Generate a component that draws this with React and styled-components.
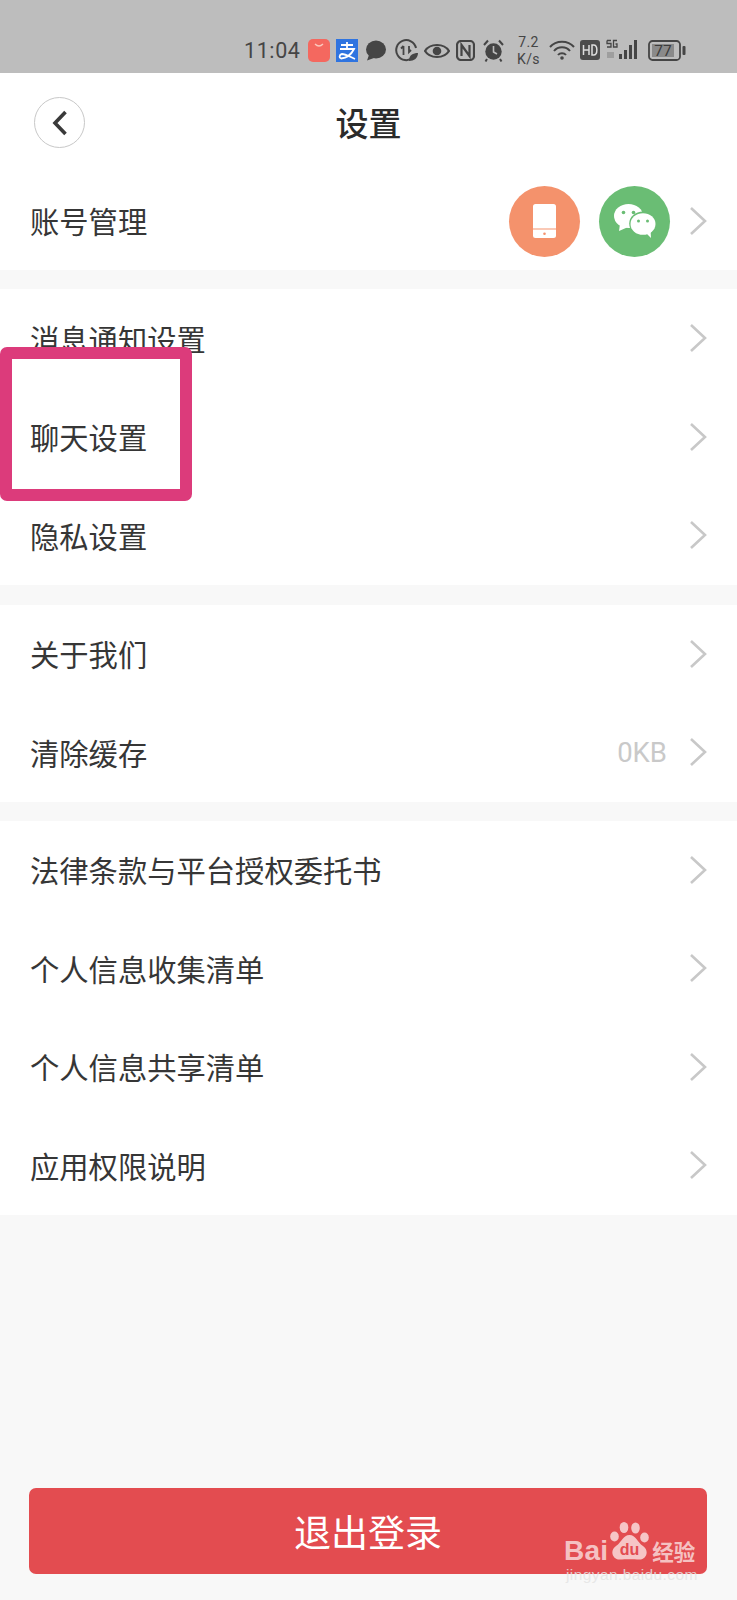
import React from 'react';
import styled, { createGlobalStyle } from 'styled-components';

const GlobalStyle = createGlobalStyle`
  html, body {
    margin: 0;
    padding: 0;
    background: #f8f8f8;
  }
  body {
    font-family: "Noto Sans CJK SC", "Liberation Sans", sans-serif;
  }
`;

const Page = styled.div`
  position: relative;
  width: 737px;
  height: 1600px;
  overflow: hidden;
  display: flex;
  flex-direction: column;
  background: #f8f8f8;
`;

const StatusBar = styled.div`
  height: 73px;
  flex: none;
  box-sizing: border-box;
  padding: 32px 48px 0 244px;
  display: flex;
  align-items: flex-start;
  background: #bdbdbd;
  color: #454545;
`;

const Clock = styled.span`
  font-family: "Roboto", sans-serif;
  font-size: 21.5px;
  line-height: 37px;
  letter-spacing: 0.6px;
  width: 64px;
  flex: none;
`;

const StatusIcon = styled.svg`
  flex: none;
  margin-top: ${p => p.$top || 7}px;
  margin-right: ${p => p.$gap || 0}px;
`;

const Speed = styled.span`
  width: 35px;
  margin: 2px 3px 0 0;
  flex: none;
  font-family: "Roboto", sans-serif;
  font-size: 14px;
  line-height: 16.5px;
  text-align: center;
  letter-spacing: 0.4px;
`;

const Header = styled.header`
  position: relative;
  height: 99px;
  flex: none;
  box-sizing: border-box;
  padding-bottom: 1px;
  display: flex;
  align-items: center;
  justify-content: center;
  background: #fff;
`;

const BackButton = styled.div`
  position: absolute;
  left: 34px;
  top: 24px;
  width: 51px;
  height: 51px;
  box-sizing: border-box;
  border: 1px solid #c8c8c8;
  border-radius: 50%;
  display: flex;
  align-items: center;
  justify-content: center;
`;

const Title = styled.h1`
  margin: 0;
  font-size: 33px;
  font-weight: 500;
  line-height: 1;
  color: #2b2b2b;
`;

const Section = styled.section`
  flex: none;
  background: #fff;
  margin-top: ${p => p.$gap || 0}px;
`;

const Row = styled.div`
  height: ${p => p.$h || 98.5}px;
  box-sizing: border-box;
  padding: 0 30px;
  display: flex;
  align-items: center;
  color: #363636;
  font-size: 29.3px;
`;

const Label = styled.span`
  flex: 1;
  line-height: 1;
`;

const Hint = styled.span`
  color: #c9c9c9;
  font-family: "Roboto", sans-serif;
  font-size: 27.5px;
  margin-right: 22px;
`;

const Badge = styled.div`
  width: 71px;
  height: 71px;
  border-radius: 50%;
  flex: none;
  display: flex;
  align-items: center;
  justify-content: center;
  background: ${p => p.$color};
  margin-right: ${p => p.$gap}px;
`;

const LogoutButton = styled.div`
  margin: auto 30px 26px 29px;
  height: 86px;
  flex: none;
  border-radius: 7px;
  background: #e34c50;
  color: #fff;
  font-size: 37px;
  display: flex;
  align-items: center;
  justify-content: center;
`;

const Highlight = styled.div`
  position: absolute;
  left: 0;
  top: 347px;
  width: 192px;
  height: 154px;
  box-sizing: border-box;
  border: 12px solid #dc3b7b;
  border-radius: 7px;
`;

const Watermark = styled.div`
  position: absolute;
  left: 564px;
  top: 1522px;
  width: 136px;
  color: rgba(255, 255, 255, 0.68);
`;

const Brand = styled.div`
  display: flex;
  align-items: flex-end;
  height: 42px;
`;

const BrandLatin = styled.span`
  font-family: "Liberation Sans", sans-serif;
  font-weight: 700;
  font-size: 28px;
  line-height: 26px;
  letter-spacing: 0.2px;
`;

const BrandCjk = styled.span`
  margin-left: 1px;
  font-size: 21.5px;
  font-weight: 700;
  line-height: 26px;
`;

const PawMark = styled.svg`
  flex: none;
  margin: 0 2px 4px 2px;
`;

const Domain = styled.div`
  margin-top: 3px;
  padding-left: 2px;
  font-family: "Liberation Sans", sans-serif;
  font-size: 15.5px;
  line-height: 16px;
  letter-spacing: 0.4px;
  white-space: nowrap;
  color: rgba(228, 228, 228, 0.85);
`;

const Chevron = () => (
  <svg width="18" height="30" viewBox="0 0 18 30">
    <path d="M2 2 L16 15 L2 28" fill="none" stroke="#c8c8c8" strokeWidth="2.6" />
  </svg>
);

const ListRow = ({ label, hint }) => (
  <Row>
    <Label>{label}</Label>
    {hint && <Hint>{hint}</Hint>}
    <Chevron />
  </Row>
);

const PhoneIcon = () => (
  <svg width="23" height="34" viewBox="0 0 23 34">
    <path d="M2.500 0 H20.500 a2.500 2.500 0 0 1 2.500 2.500 V24.500 H0 V2.500 a2.500 2.500 0 0 1 2.500 -2.500z" fill="#fff" />
    <path d="M0 25.500 H23 V31.500 a2.500 2.500 0 0 1 -2.500 2.500 H2.500 a2.500 2.500 0 0 1 -2.500 -2.500z" fill="#fff" />
    <circle cx="11.500" cy="29.700" r="1.300" fill="#f4926c" />
  </svg>
);

const WechatIcon = () => (
  <svg width="42" height="34" viewBox="0 0 42 34">
    <ellipse cx="14.500" cy="12" rx="14.500" ry="12" fill="#fff" />
    <path d="M6 20 L5 27 L13 23.500z" fill="#fff" />
    <circle cx="9.500" cy="8.500" r="1.800" fill="#6abd74" />
    <circle cx="19.500" cy="8.500" r="1.800" fill="#6abd74" />
    <ellipse cx="29" cy="19.500" rx="13.800" ry="12" fill="#6abd74" />
    <ellipse cx="29" cy="20" rx="12.500" ry="10.800" fill="#fff" />
    <path d="M32 29 L37 34 L36.500 26z" fill="#fff" />
    <circle cx="24.500" cy="17" r="1.500" fill="#6abd74" />
    <circle cx="33.500" cy="17" r="1.500" fill="#6abd74" />
  </svg>
);

const BackChevron = () => (
  <svg width="16" height="26" viewBox="0 0 16 26">
    <path d="M13.500 2 L3 13 L13.500 24" fill="none" stroke="#3a3a3a" strokeWidth="3.600" />
  </svg>
);

const StatusIcons = () => (
  <>
    <StatusIcon width="22" height="23" viewBox="0 0 22 23" $gap={6}>
      <rect width="22" height="23" rx="5" fill="#f4685f" />
      <path d="M7 5 q4 4 8 0" fill="none" stroke="#fbc9bd" strokeWidth="1.300" />
    </StatusIcon>
    <StatusIcon width="22" height="23" viewBox="0 0 22 23" $gap={7}>
      <rect width="22" height="23" fill="#2f74e0" />
      <path d="M5 6 H17 M11 3 V9 M4 10 H18 C15 16 10 19 5 19.500 C3 19 3 15.500 6 15 C10 15 14 18 19 20" fill="none" stroke="#fff" strokeWidth="1.800" />
    </StatusIcon>
    <StatusIcon width="21" height="21" viewBox="0 0 21 21" $top={8} $gap={9}>
      <ellipse cx="11" cy="9.500" rx="10" ry="9" fill="#454545" />
      <path d="M4 15 L2 20.500 L9 18z" fill="#454545" />
    </StatusIcon>
    <StatusIcon width="23" height="23" viewBox="0 0 23 23" $gap={6}>
      <path d="M18 18.500 A10 10 0 1 1 21 9" fill="none" stroke="#454545" strokeWidth="2" />
      <path d="M8.500 7 V16 M8.500 7 L6 9.500 M14 7 V13 L16 11" fill="none" stroke="#454545" strokeWidth="1.800" />
      <path d="M14 22 C14 16 18 14 23 14 C23 19 19 22 14 22z" fill="#454545" />
    </StatusIcon>
    <StatusIcon width="26" height="16" viewBox="0 0 26 16" $top={11} $gap={6}>
      <path d="M1 8 C6 0 20 0 25 8 C20 16 6 16 1 8z" fill="none" stroke="#454545" strokeWidth="2.200" />
      <circle cx="13" cy="8" r="4.300" fill="#454545" />
    </StatusIcon>
    <StatusIcon width="19" height="21" viewBox="0 0 19 21" $top={8} $gap={8}>
      <rect x="1" y="1" width="17" height="19" rx="4" fill="none" stroke="#454545" strokeWidth="2.200" />
      <path d="M5.500 16 V5 L13.500 16 V5" fill="none" stroke="#454545" strokeWidth="2.200" />
    </StatusIcon>
    <StatusIcon width="21" height="23" viewBox="0 0 21 23" $gap={7}>
      <circle cx="10.500" cy="12.500" r="8.200" fill="#454545" />
      <path d="M10.500 7 V13 L14 15" fill="none" stroke="#bdbdbd" strokeWidth="1.600" />
      <path d="M1 6 L5 1.500 M20 6 L16 1.500 M4 20 L2.500 22.500 M17 20 L18.500 22.500" stroke="#454545" strokeWidth="2" />
    </StatusIcon>
    <Speed>7.2<br />K/s</Speed>
    <StatusIcon width="26" height="20" viewBox="0 0 26 20" $top={8} $gap={5}>
      <path d="M1 7 C7 0 19 0 25 7 M5 11 C9 6 17 6 21 11 M9 15 C11 12.500 15 12.500 17 15" fill="none" stroke="#454545" strokeWidth="2" />
      <circle cx="13" cy="18" r="1.800" fill="#454545" />
    </StatusIcon>
    <StatusIcon width="20" height="20" viewBox="0 0 20 20" $top={8} $gap={6}>
      <rect width="20" height="20" rx="3" fill="#4c4c4c" />
      <path d="M3.500 5 V15 M3.500 10 H9 M9 5 V15 M12 5 V15 H13.500 C18 15 18 5 13.500 5z" fill="none" stroke="#ddd" strokeWidth="1.500" />
    </StatusIcon>
    <StatusIcon width="34" height="21" viewBox="0 0 34 21" $top={7} $gap={8}>
      <path d="M1 1.500 H5 M1 1.500 V4.500 H5 V8 H1 M11 1.500 H7.500 V8 H11 V5 H9.500" fill="none" stroke="#454545" strokeWidth="1.300" />
      <rect x="1" y="13" width="7" height="6" fill="#9e9e9e" />
      <rect x="13" y="15" width="3" height="5" fill="#454545" />
      <rect x="18" y="11" width="3" height="9" fill="#454545" />
      <rect x="23" y="6" width="3" height="14" fill="#454545" />
      <rect x="28" y="1" width="3" height="19" fill="#454545" />
    </StatusIcon>
    <StatusIcon width="38" height="21" viewBox="0 0 38 21" $top={8}>
      <rect x="1" y="1" width="31" height="19" rx="3.500" fill="none" stroke="#454545" strokeWidth="1.800" />
      <rect x="4" y="4" width="22" height="13" fill="#8a8a8a" />
      <text x="15" y="16" textAnchor="middle" fontSize="15.500" fontFamily="Roboto, sans-serif" fill="#3c3c3c">77</text>
      <rect x="34.500" y="6" width="3" height="9" rx="1" fill="#454545" />
    </StatusIcon>
  </>
);

const PawIcon = () => (
  <PawMark width="39" height="38" viewBox="0 0 39 38">
    <g fill="rgba(255,255,255,0.68)">
      <ellipse cx="14" cy="5.500" rx="4.300" ry="5.500" />
      <ellipse cx="25.500" cy="6" rx="4.300" ry="5.500" />
      <ellipse cx="4.500" cy="14.500" rx="4.300" ry="5" />
      <ellipse cx="34.500" cy="15.500" rx="4.300" ry="5" />
      <path d="M19.500 13 C26 13 27 20 33 24 C40 29 36 38 29 37.500 C24 37 15 37 10 37.500 C3 38 -1 29 6 24 C12 20 13 13 19.500 13z" />
    </g>
    <text x="19.500" y="33" textAnchor="middle" fontFamily="Liberation Sans, sans-serif" fontWeight="700" fontSize="16" fill="#e34c50">du</text>
  </PawMark>
);

const App = () => (
  <Page>
    <GlobalStyle />
    <StatusBar>
      <Clock>11:04</Clock>
      <StatusIcons />
    </StatusBar>

    <Header>
      <BackButton><BackChevron /></BackButton>
      <Title>设置</Title>
    </Header>

    <Section>
      <Row $h={98}>
        <Label>账号管理</Label>
        <Badge $color="#f4926c" $gap={19}><PhoneIcon /></Badge>
        <Badge $color="#6abd74" $gap={19}><WechatIcon /></Badge>
        <Chevron />
      </Row>
    </Section>

    <Section $gap={19}>
      <ListRow label="消息通知设置" />
      <ListRow label="聊天设置" />
      <ListRow label="隐私设置" />
    </Section>

    <Section $gap={20}>
      <ListRow label="关于我们" />
      <ListRow label="清除缓存" hint="0KB" />
    </Section>

    <Section $gap={19}>
      <ListRow label="法律条款与平台授权委托书" />
      <ListRow label="个人信息收集清单" />
      <ListRow label="个人信息共享清单" />
      <ListRow label="应用权限说明" />
    </Section>

    <LogoutButton>退出登录</LogoutButton>

    <Highlight />

    <Watermark>
      <Brand>
        <BrandLatin>Bai</BrandLatin>
        <PawIcon />
        <BrandCjk>经验</BrandCjk>
      </Brand>
      <Domain>jingyan.baidu.com</Domain>
    </Watermark>
  </Page>
);

export default App;
